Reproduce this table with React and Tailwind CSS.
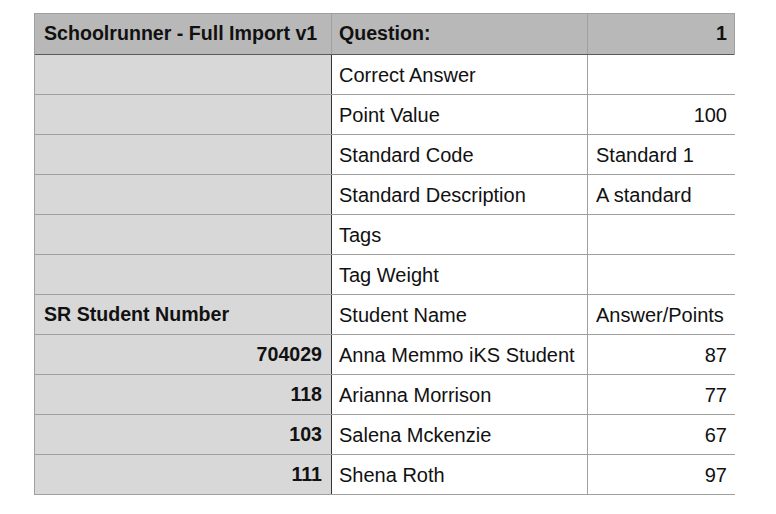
const meta = [
  ["Correct Answer", ""],
  ["Point Value", "100", true],
  ["Standard Code", "Standard 1"],
  ["Standard Description", "A standard"],
  ["Tags", ""],
  ["Tag Weight", ""],
];

const students = [
  ["704029", "Anna Memmo iKS Student", "87"],
  ["118", "Arianna Morrison", "77"],
  ["103", "Salena Mckenzie", "67"],
  ["111", "Shena Roth", "97"],
];

const Row = ({ a, b, c, aBold, aRight, cRight, header }) => (
  <div
    className={`grid grid-cols-[297px_256px_147px] h-[40px] border-b ${
      header ? "bg-[#b8b8b8] border-[#5a5a5a] h-[41px]" : "border-[#a0a0a0]"
    }`}
  >
    <div
      className={`flex items-center pl-[9px] pr-[9px] border-r ${
        header ? "border-[#a0a0a0]" : "bg-[#d8d8d8] border-[#333]"
      } ${aBold ? "font-bold text-[19.6px]" : ""} ${aRight ? "justify-end" : ""}`}
    >
      {a}
    </div>
    <div
      className={`flex items-center px-[7px] border-r border-[#a0a0a0] ${
        header ? "font-bold text-[19.6px]" : "bg-white"
      }`}
    >
      {b}
    </div>
    <div
      className={`flex items-center px-[8px] ${header ? "font-bold text-[19.6px]" : "bg-white"} ${
        cRight ? "justify-end" : ""
      }`}
    >
      {c}
    </div>
  </div>
);

export default function App() {
  return (
    <div className="w-[776px] h-[514px] bg-white pt-[13px] pl-[34px] text-[20px] text-[#111] font-['Liberation_Sans',Arial,sans-serif]">
      <div className="w-[701px] border border-b-0 border-[#a0a0a0]">
        <Row header a="Schoolrunner - Full Import v1" aBold b="Question:" c="1" cRight />
        {meta.map(([b, c, r]) => (
          <Row key={b} a="" b={b} c={c} cRight={r} />
        ))}
        <Row a="SR Student Number" aBold b="Student Name" c="Answer/Points" />
        {students.map(([a, b, c]) => (
          <Row key={a} a={a} aBold aRight b={b} c={c} cRight />
        ))}
      </div>
    </div>
  );
}
